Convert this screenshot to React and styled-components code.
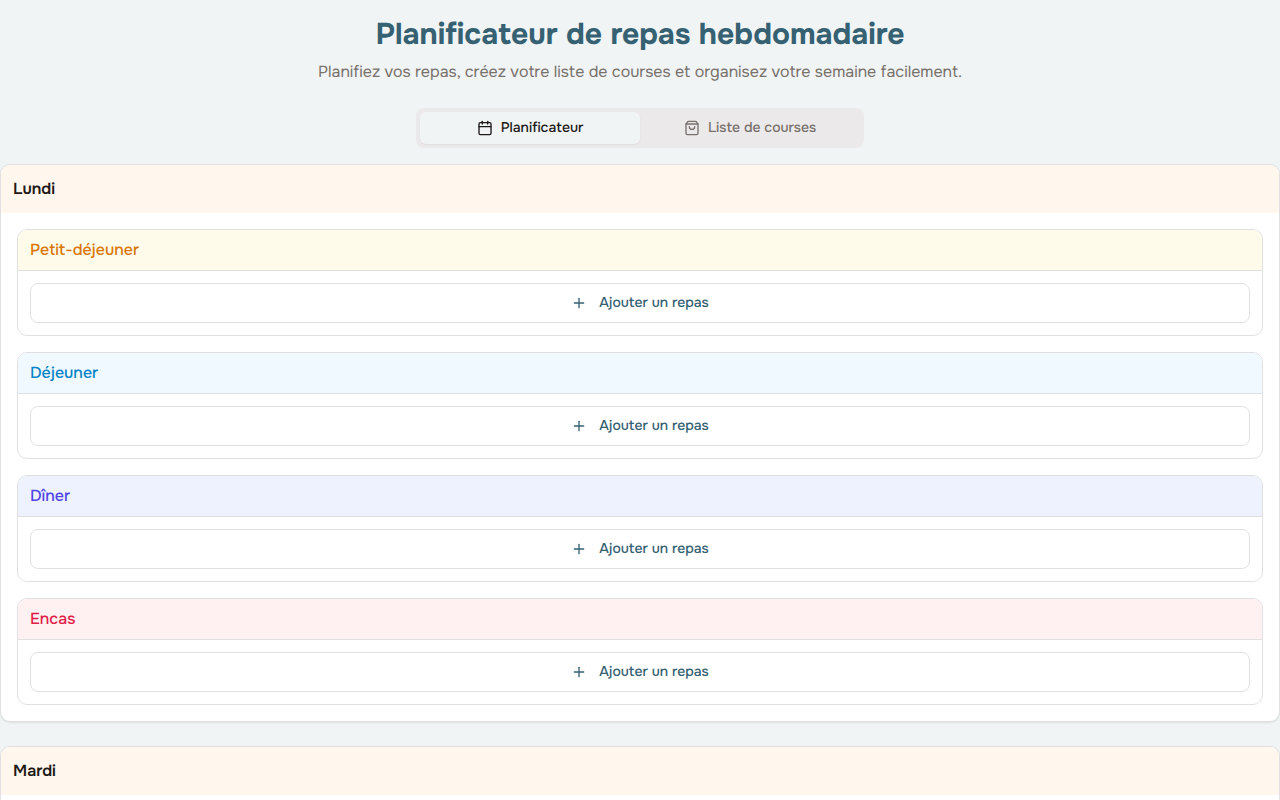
import React, { useState } from "react";
import styled, { createGlobalStyle } from "styled-components";
import { Calendar, Plus, ShoppingBag } from "lucide-react";

const PRIMARY = "#356173";
const TEXT = "#1c1917";
const MUTED_TEXT = "#78716c";
const BACKGROUND = "#f0f4f5";
const MUTED = "#ece9ea";
const LINE = "#e0e0e0";

const GlobalStyle = createGlobalStyle`
  *,
  *::before,
  *::after {
    box-sizing: border-box;
  }

  body {
    margin: 0;
    background-color: ${BACKGROUND};
    color: ${TEXT};
    font-family: Onest, Inter, "Liberation Sans", sans-serif;
    font-size: 16px;
    line-height: 24px;
    text-rendering: geometricPrecision;
  }

  button {
    font-family: inherit;
    text-rendering: inherit;
    cursor: pointer;
  }
`;

const Page = styled.main`
  display: flex;
  flex-direction: column;
  gap: 16px;
  padding: 16px 0;
`;

const Header = styled.header`
  display: flex;
  flex-direction: column;
  gap: 6px;
  padding-bottom: 8px;
  text-align: center;
`;

const Title = styled.h1`
  margin: 0;
  color: ${PRIMARY};
  font-size: 30px;
  font-weight: 700;
  line-height: 38px;
`;

const Subtitle = styled.p`
  margin: 0;
  color: ${MUTED_TEXT};
`;

const TabList = styled.div`
  display: grid;
  grid-template-columns: 1fr 1fr;
  width: 100%;
  max-width: 448px;
  margin: 0 auto;
  padding: 4px;
  border-radius: 8px;
  background-color: ${MUTED};
`;

const Tab = styled.button`
  display: flex;
  align-items: center;
  justify-content: center;
  gap: 8px;
  padding: 6px 12px;
  border: 0;
  border-radius: 6px;
  background-color: ${({ $active }) => ($active ? BACKGROUND : "transparent")};
  box-shadow: ${({ $active }) =>
    $active ? "0 1px 2px rgba(0, 0, 0, 0.05)" : "none"};
  color: ${({ $active }) => ($active ? TEXT : MUTED_TEXT)};
  font-size: 14px;
  font-weight: 500;
  line-height: 20px;
`;

const DayList = styled.div`
  display: flex;
  flex-direction: column;
  gap: 24px;
`;

const DayCard = styled.section`
  overflow: hidden;
  border: 1px solid ${LINE};
  border-radius: 10px;
  background-color: #ffffff;
  box-shadow: 0 1px 2px rgba(0, 0, 0, 0.08);
`;

const DayTitle = styled.h2`
  margin: 0;
  padding: 12px;
  background-color: #fff6ed;
  font-size: 16px;
  font-weight: 600;
`;

const DayContent = styled.div`
  display: flex;
  flex-direction: column;
  gap: 16px;
  padding: 16px;
`;

const MealCard = styled.section`
  overflow: hidden;
  border: 1px solid ${LINE};
  border-radius: 10px;
`;

const MealTitle = styled.h3`
  margin: 0;
  padding: 8px 12px;
  border-bottom: 1px solid ${LINE};
  background-color: ${({ $background }) => $background};
  color: ${({ $color }) => $color};
  font-size: 16px;
  font-weight: 500;
`;

const MealContent = styled.div`
  padding: 12px;
`;

const AddButton = styled.button`
  display: flex;
  align-items: center;
  justify-content: center;
  gap: 12px;
  width: 100%;
  height: 40px;
  border: 1px solid ${LINE};
  border-radius: 8px;
  background-color: #ffffff;
  color: ${PRIMARY};
  font-size: 14px;
  font-weight: 500;
  line-height: 20px;
`;

const tabs = [
  { id: "planner", label: "Planificateur", Icon: Calendar },
  { id: "shopping", label: "Liste de courses", Icon: ShoppingBag },
];

const days = ["Lundi", "Mardi"];

const meals = [
  { label: "Petit-déjeuner", color: "#d97706", background: "#fffbeb" },
  { label: "Déjeuner", color: "#0284c7", background: "#f0f9ff" },
  { label: "Dîner", color: "#4f46e5", background: "#eef2ff" },
  { label: "Encas", color: "#e11d48", background: "#fff1f2" },
];

const Meal = ({ meal }) => (
  <MealCard>
    <MealTitle $color={meal.color} $background={meal.background}>
      {meal.label}
    </MealTitle>
    <MealContent>
      <AddButton type="button">
        <Plus size={16} />
        Ajouter un repas
      </AddButton>
    </MealContent>
  </MealCard>
);

const Day = ({ name }) => (
  <DayCard>
    <DayTitle>{name}</DayTitle>
    <DayContent>
      {meals.map((meal) => (
        <Meal key={meal.label} meal={meal} />
      ))}
    </DayContent>
  </DayCard>
);

const App = () => {
  const [activeTab, setActiveTab] = useState("planner");

  return (
    <>
      <GlobalStyle />
      <Page>
        <Header>
          <Title>Planificateur de repas hebdomadaire</Title>
          <Subtitle>
            Planifiez vos repas, créez votre liste de courses et organisez votre
            semaine facilement.
          </Subtitle>
        </Header>
        <TabList role="tablist">
          {tabs.map(({ id, label, Icon }) => (
            <Tab
              key={id}
              type="button"
              role="tab"
              aria-selected={activeTab === id}
              $active={activeTab === id}
              onClick={() => setActiveTab(id)}
            >
              <Icon size={16} />
              {label}
            </Tab>
          ))}
        </TabList>
        {activeTab === "planner" && (
          <DayList>
            {days.map((day) => (
              <Day key={day} name={day} />
            ))}
          </DayList>
        )}
      </Page>
    </>
  );
};

export default App;
